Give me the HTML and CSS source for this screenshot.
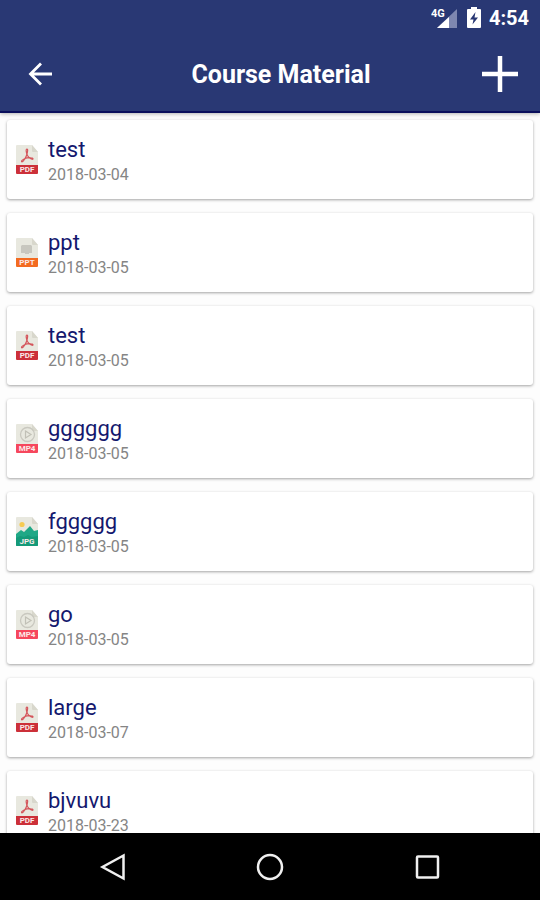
FILE: index.html
```html
<!DOCTYPE html>
<html lang="en">
<head>
<meta charset="utf-8">
<meta name="viewport" content="width=device-width, initial-scale=1">
<title>Course Material</title>
<link rel="stylesheet" href="styles.css">
</head>
<body>
<svg class="defs" aria-hidden="true">
  <symbol id="page" viewBox="0 0 22 29">
    <path d="M1 0H16L22 7V21H0V1Q0 0 1 0Z" fill="#e8e8df"/>
    <path d="M16 0L22 7H17Q16 7 16 6Z" fill="#d8d7cc"/>
  </symbol>
  <symbol id="pdf" viewBox="0 0 22 29">
    <use href="#page"/>
    <path d="M11 4C9.500 4 10.300 8 11.500 10.500C12.800 13 16 15 17 14C17.500 12.500 12 12.300 9 13.500C6.500 14.500 4.800 16.500 5.800 16.800C7.500 17 10 12.500 11 9C11.700 6.500 12 4 11 4Z" fill="none" stroke="#d4565c" stroke-width="1.200"/>
    <path d="M0 20H22V28Q22 29 21 29H1Q0 29 0 28Z" fill="#cc3039"/>
  </symbol>
  <symbol id="ppt" viewBox="0 0 22 29">
    <use href="#page"/>
    <path d="M6 7H15L16 8V15H13V16H9V15H5V8Z" fill="#c8c7bf"/>
    <path d="M0 20H22V28Q22 29 21 29H1Q0 29 0 28Z" fill="#f36b21"/>
  </symbol>
  <symbol id="mp4" viewBox="0 0 22 29">
    <use href="#page"/>
    <circle cx="11.500" cy="10.500" r="7" fill="none" stroke="#c9c8bf" stroke-width="1.300"/>
    <path d="M9.500 7L15 10.500L9.500 14Z" fill="none" stroke="#c1c0b6" stroke-width="1.200"/>
    <path d="M0 20H22V28Q22 29 21 29H1Q0 29 0 28Z" fill="#f6475d"/>
  </symbol>
  <symbol id="jpg" viewBox="0 0 22 29">
    <use href="#page"/>
    <circle cx="6" cy="7.500" r="2.600" fill="#f6cb52"/>
    <path d="M0 17L5 13L8 15L14 9L18 14L22 13V28Q22 29 21 29H1Q0 29 0 28Z" fill="#1fa886"/>
    <path d="M0 21L4 19L8 20L12 18L16 20L22 19V28Q22 29 21 29H1Q0 29 0 28Z" fill="#159a79"/>
  </symbol>
</svg>

<header class="top">
  <div class="status">
    <svg class="signal" viewBox="0 0 28 24" role="img" aria-label="4G signal">
      <path d="M26 3V22H6Z" fill="#7e87b0"/>
      <path d="M18 11V22H6Z" fill="#fff"/>
      <text x="0" y="11" class="network">4G</text>
    </svg>
    <svg class="battery" viewBox="0 0 14 22" role="img" aria-label="Battery charging">
      <path d="M4 0H10V2H13Q14 2 14 3V20Q14 21 13 21H1Q0 21 0 20V3Q0 2 1 2H4Z" fill="#fff"/>
      <path d="M8.500 5L3 12.500H6.500L5.500 17.500L11 10.500H7.500Z" fill="#293874"/>
    </svg>
    <time class="clock">4:54</time>
  </div>
  <div class="appbar">
    <button class="action" type="button" aria-label="Back">
      <svg class="back" viewBox="0 0 24 24"><path d="M24 12H3M13 1.500L2.500 12L13 22.500" fill="none" stroke="#fff" stroke-width="2.800"/></svg>
    </button>
    <h1 class="title">Course Material</h1>
    <button class="action" type="button" aria-label="Add material">
      <svg class="add" viewBox="0 0 38 38"><path d="M19 1V37M1 19H37" stroke="#fff" stroke-width="4.500" fill="none"/></svg>
    </button>
  </div>
</header>

<main class="content">
  <ul class="list">
    <li><a class="card" href="#"><svg class="file" viewBox="0 0 22 29"><use href="#pdf"/><text class="ext" x="11" y="27">PDF</text></svg><span class="info"><span class="name">test</span><span class="date">2018-03-04</span></span></a></li>
    <li><a class="card" href="#"><svg class="file" viewBox="0 0 22 29"><use href="#ppt"/><text class="ext" x="11" y="27">PPT</text></svg><span class="info"><span class="name">ppt</span><span class="date">2018-03-05</span></span></a></li>
    <li><a class="card" href="#"><svg class="file" viewBox="0 0 22 29"><use href="#pdf"/><text class="ext" x="11" y="27">PDF</text></svg><span class="info"><span class="name">test</span><span class="date">2018-03-05</span></span></a></li>
    <li><a class="card" href="#"><svg class="file" viewBox="0 0 22 29"><use href="#mp4"/><text class="ext" x="11" y="27">MP4</text></svg><span class="info"><span class="name">gggggg</span><span class="date">2018-03-05</span></span></a></li>
    <li><a class="card" href="#"><svg class="file" viewBox="0 0 22 29"><use href="#jpg"/><text class="ext" x="11" y="27">JPG</text></svg><span class="info"><span class="name">fggggg</span><span class="date">2018-03-05</span></span></a></li>
    <li><a class="card" href="#"><svg class="file" viewBox="0 0 22 29"><use href="#mp4"/><text class="ext" x="11" y="27">MP4</text></svg><span class="info"><span class="name">go</span><span class="date">2018-03-05</span></span></a></li>
    <li><a class="card" href="#"><svg class="file" viewBox="0 0 22 29"><use href="#pdf"/><text class="ext" x="11" y="27">PDF</text></svg><span class="info"><span class="name">large</span><span class="date">2018-03-07</span></span></a></li>
    <li><a class="card" href="#"><svg class="file" viewBox="0 0 22 29"><use href="#pdf"/><text class="ext" x="11" y="27">PDF</text></svg><span class="info"><span class="name">bjvuvu</span><span class="date">2018-03-23</span></span></a></li>
  </ul>
</main>

<nav class="system">
  <button type="button" aria-label="Back"><svg viewBox="0 0 28 28"><path d="M24.500 2.500V25.500L3.500 14Z"/></svg></button>
  <button type="button" aria-label="Home"><svg viewBox="0 0 28 28"><circle cx="14" cy="14" r="12"/></svg></button>
  <button type="button" aria-label="Recent apps"><svg viewBox="0 0 28 28"><rect x="4" y="3.500" width="21" height="21" rx="1"/></svg></button>
</nav>
</body>
</html>
```
FILE: styles.css
```css
* {
  box-sizing: border-box;
}

body {
  margin: 0;
  height: 100vh;
  display: flex;
  flex-direction: column;
  background: #fdfdfd;
  font-family: Roboto, "Liberation Sans", sans-serif;
}

button {
  border: 0;
  padding: 0;
  background: none;
  display: flex;
  align-items: center;
  justify-content: center;
}

svg {
  display: block;
}

.defs {
  position: absolute;
  width: 0;
  height: 0;
}

.top {
  flex: none;
  background: #293874;
  color: #fff;
  border-bottom: 2px solid #0a0f5c;
  box-shadow: 0 1px 4px rgba(0, 0, 0, 0.3);
}

.status {
  height: 36px;
  padding: 0 11px;
  display: flex;
  align-items: center;
  justify-content: flex-end;
  gap: 8px;
}

.signal {
  width: 28px;
  height: 24px;
}

.network {
  font-size: 11px;
  font-weight: 700;
  fill: #fff;
}

.battery {
  width: 14px;
  height: 22px;
}

.clock {
  font-size: 20px;
  font-weight: 700;
}

.appbar {
  height: 75px;
  padding: 0 20px;
  display: flex;
  align-items: center;
}

.action {
  flex: none;
  width: 40px;
  height: 40px;
}

.back {
  width: 24px;
  height: 24px;
}

.add {
  flex: none;
  width: 38px;
  height: 38px;
}

.title {
  flex: 1;
  margin: 0;
  padding: 2px 0 0 22px;
  font-size: 25px;
  font-weight: 700;
  line-height: 32px;
  text-align: center;
}

.content {
  flex: 1;
  min-height: 0;
  overflow: hidden;
}

.list {
  margin: 0;
  padding: 7px 7px 14px;
  list-style: none;
  display: grid;
  gap: 14px;
}

.card {
  display: flex;
  align-items: center;
  gap: 10px;
  padding: 14px 9px;
  border-radius: 3px;
  background: #fff;
  box-shadow: 0 1px 3px rgba(0, 0, 0, 0.36);
  text-decoration: none;
}

.file {
  flex: none;
  width: 22px;
  height: 29px;
}

.ext {
  font-size: 8px;
  font-weight: 700;
  text-anchor: middle;
  fill: #fbe9e9;
}

.info {
  display: grid;
}

.name {
  font-size: 22px;
  line-height: 31px;
  color: #14186e;
}

.date {
  font-size: 16px;
  line-height: 20px;
  color: #858585;
}

.system {
  flex: none;
  height: 67px;
  padding: 0 35px;
  display: grid;
  grid-template-columns: repeat(3, 1fr);
  background: #000;
}

.system svg {
  width: 28px;
  height: 28px;
  fill: none;
  stroke: #f0f0f0;
  stroke-width: 2.5;
}
```
